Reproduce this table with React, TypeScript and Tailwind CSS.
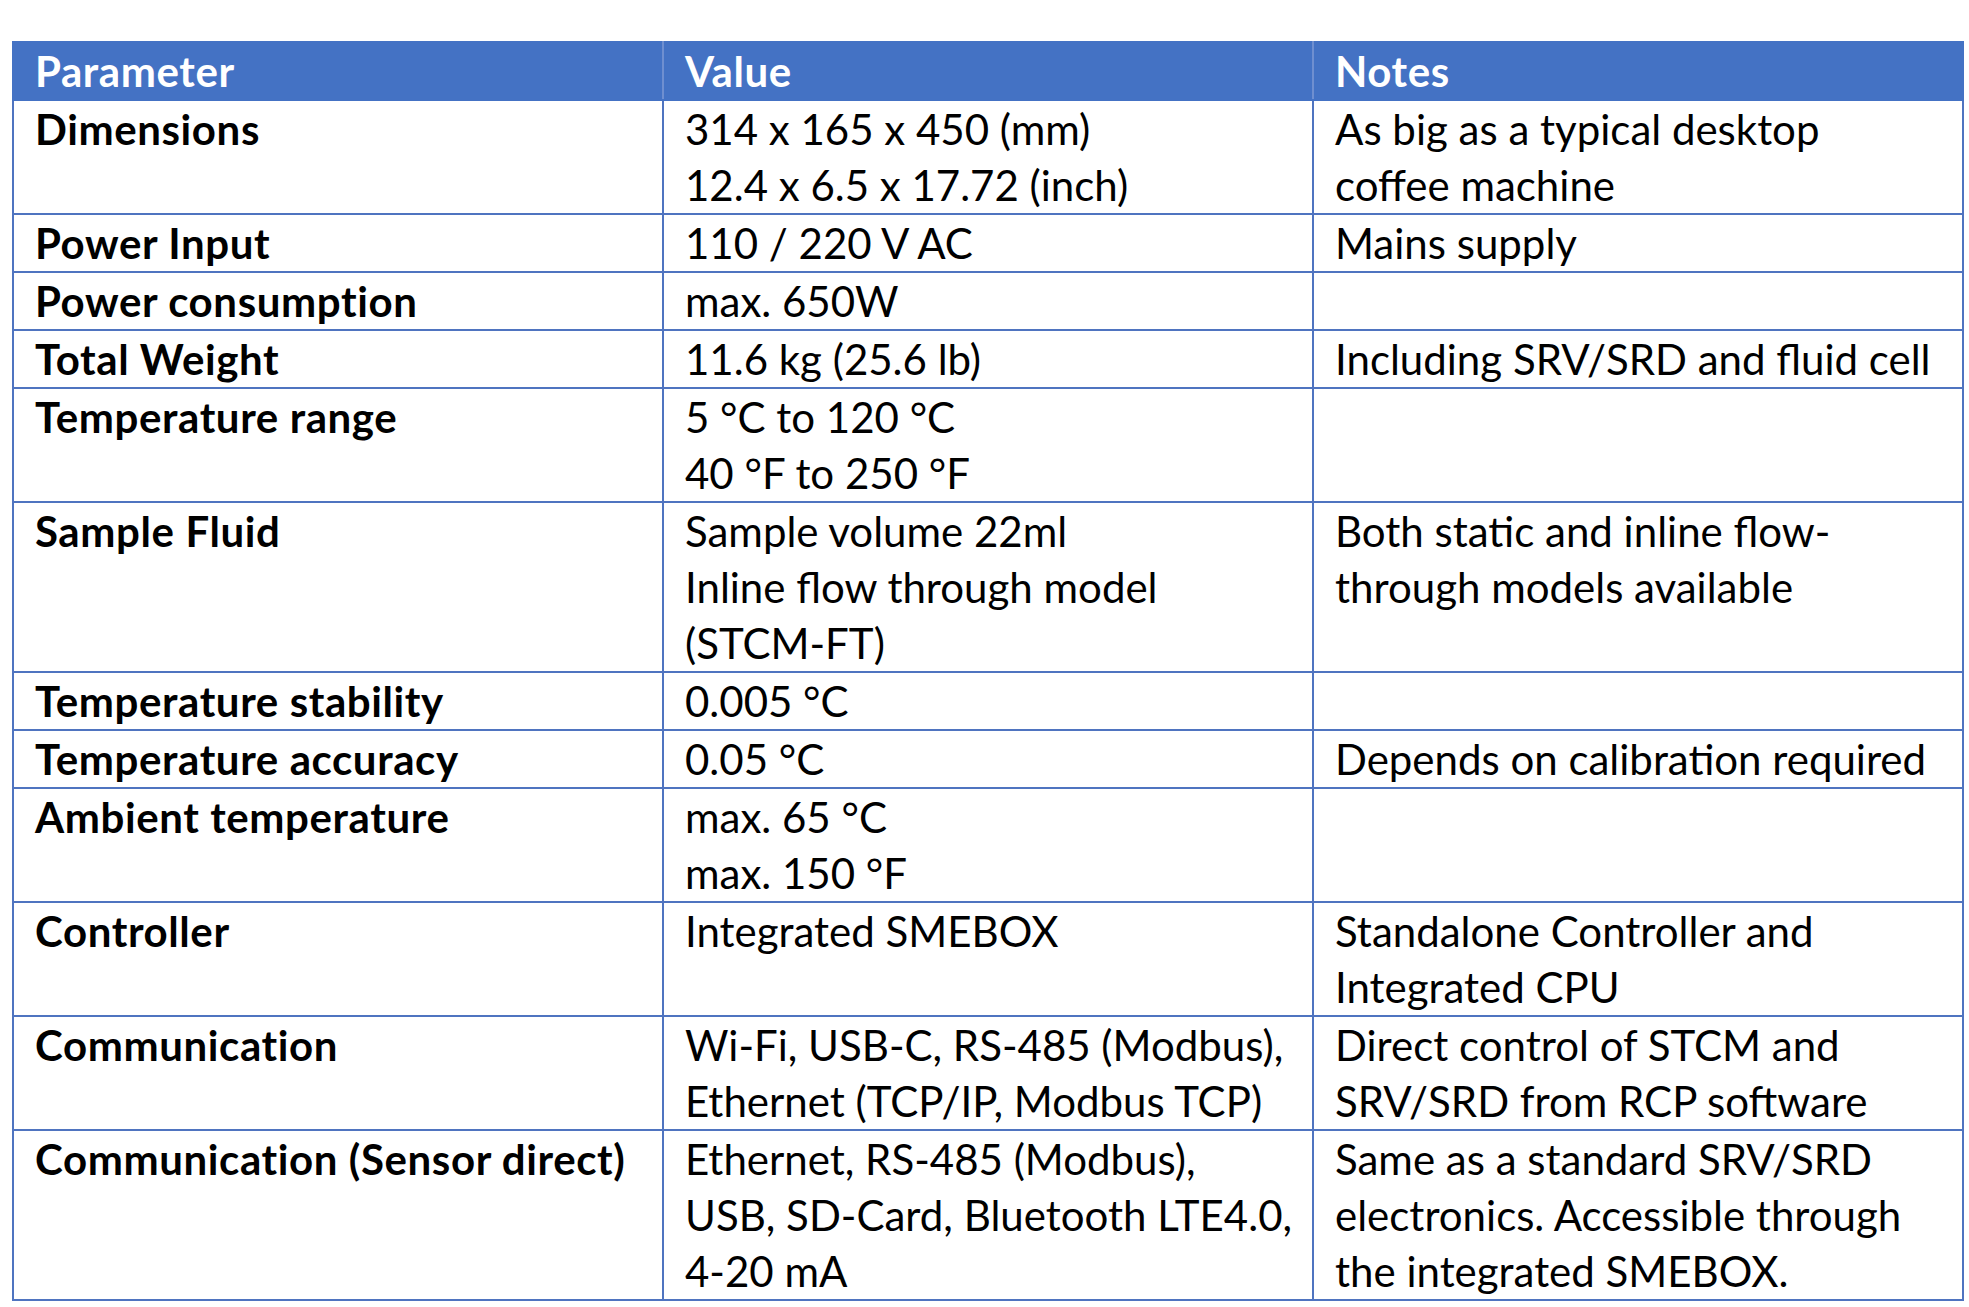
import React from "react";

type Row = { p: string; v: string[]; n: string[] };

const rows: Row[] = [
  { p: "Dimensions", v: ["314 x 165 x 450 (mm)", "12.4 x 6.5 x 17.72 (inch)"], n: ["As big as a typical desktop", "coffee machine"] },
  { p: "Power Input", v: ["110 / 220 V AC"], n: ["Mains supply"] },
  { p: "Power consumption", v: ["max. 650W"], n: [] },
  { p: "Total Weight", v: ["11.6 kg (25.6 lb)"], n: ["Including SRV/SRD and fluid cell"] },
  { p: "Temperature range", v: ["5 °C to 120 °C", "40 °F to 250 °F"], n: [] },
  { p: "Sample Fluid", v: ["Sample volume 22ml", "Inline flow through model", "(STCM-FT)"], n: ["Both static and inline flow-", "through models available"] },
  { p: "Temperature stability", v: ["0.005 °C"], n: [] },
  { p: "Temperature accuracy", v: ["0.05 °C"], n: ["Depends on calibration required"] },
  { p: "Ambient temperature", v: ["max. 65 °C", "max. 150 °F"], n: [] },
  { p: "Controller", v: ["Integrated SMEBOX"], n: ["Standalone Controller and", "Integrated CPU"] },
  { p: "Communication", v: ["Wi-Fi, USB-C, RS-485 (Modbus),", "Ethernet (TCP/IP, Modbus TCP)"], n: ["Direct control of STCM and", "SRV/SRD from RCP software"] },
  { p: "Communication (Sensor direct)", v: ["Ethernet, RS-485 (Modbus),", "USB, SD-Card, Bluetooth LTE4.0,", "4-20 mA"], n: ["Same as a standard SRV/SRD", "electronics. Accessible through", "the integrated SMEBOX."] },
];

function Lines({ lines }: { lines: string[] }) {
  return (
    <>
      {lines.map((l, i) => (
        <div key={i} className="whitespace-nowrap">{l}</div>
      ))}
    </>
  );
}

export default function App() {
  return (
    <div className="w-[1969px] h-[1307px] bg-white pt-[41px] pl-[12px]" style={{ fontFamily: "Lato, 'Open Sans', sans-serif" }}>
      <table className="border-collapse table-fixed w-[1950px] text-[42px] leading-[56px] text-black tracking-[0px]">
        <colgroup>
          <col className="w-[650px]" />
          <col className="w-[650px]" />
          <col className="w-[650px]" />
        </colgroup>
        <thead>
          <tr className="bg-[#4472c4] text-white font-bold h-[58px] tracking-[0.6px]">
            <th className="border-2 border-[#4472c4] border-r-[#6f8fd0] text-left font-bold pl-[21px] pr-[20px] align-top">Parameter</th>
            <th className="border-2 border-[#4472c4] border-r-[#6f8fd0] text-left font-bold pl-[21px] pr-[20px] align-top">Value</th>
            <th className="border-2 border-[#4472c4] text-left font-bold pl-[21px] pr-[20px] align-top">Notes</th>
          </tr>
        </thead>
        <tbody>
          {rows.map((r, i) => (
            <tr key={i}>
              <td className="border-2 border-[#4f74c0] pl-[21px] pr-[10px] align-top font-bold whitespace-nowrap tracking-[0.6px]">{r.p}</td>
              <td className="border-2 border-[#4f74c0] pl-[21px] pr-[10px] align-top"><Lines lines={r.v} /></td>
              <td className="border-2 border-[#4f74c0] pl-[21px] pr-[10px] align-top">{r.n.length ? <Lines lines={r.n} /> : <div>&nbsp;</div>}</td>
            </tr>
          ))}
        </tbody>
      </table>
    </div>
  );
}
